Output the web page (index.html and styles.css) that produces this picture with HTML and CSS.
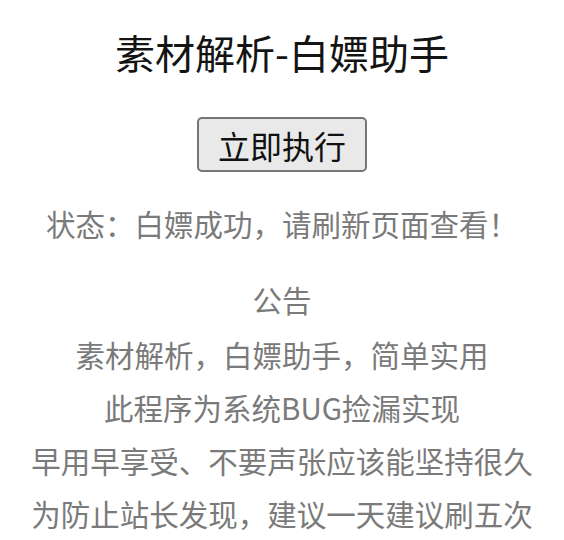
FILE: index.html
```html
<!DOCTYPE html>
<html lang="zh-CN">
<head>
<meta charset="utf-8">
<title>素材解析-白嫖助手</title>
<link rel="stylesheet" href="styles.css">
</head>
<body>
<main class="page">
  <h1 class="title">素材解析-白嫖助手</h1>
  <button class="run-btn" type="button">立即执行</button>
  <p class="status">状态：白嫖成功，请刷新页面查看！</p>
  <section class="notice">
    <p class="notice-head">公告</p>
    <p>素材解析，白嫖助手，简单实用</p>
    <p>此程序为系统BUG捡漏实现</p>
    <p>早用早享受、不要声张应该能坚持很久</p>
    <p>为防止站长发现，建议一天建议刷五次</p>
  </section>
</main>
</body>
</html>
```
FILE: styles.css
```css
html, body {
  margin: 0;
  padding: 0;
  background: #ffffff;
}
.page {
  display: flex;
  flex-direction: column;
  align-items: center;
  padding-top: 28px;
  font-family: "Microsoft YaHei", "Noto Sans CJK SC", "Noto Sans", sans-serif;
  text-align: center;
}
.title {
  margin: 0;
  font-size: 40px;
  line-height: 48px;
  font-weight: normal;
  color: #141414;
}
.run-btn {
  margin-top: 41px;
  height: 55px;
  padding: 0 19px;
  font-family: inherit;
  font-size: 32px;
  line-height: 38px;
  color: #111;
  background: #e9e9e9;
  border: 2px solid #767676;
  border-radius: 5px;
}
.status {
  margin: 25px 0 0;
  font-size: 29.5px;
  line-height: 52px;
  color: #7a7a7a;
}
.notice {
  margin-top: 24px;
  font-size: 29.5px;
  line-height: 53px;
  color: #7a7a7a;
}
.notice p {
  margin: 0;
  white-space: nowrap;
}
.notice .notice-head {
  margin-bottom: 2px;
}
```
